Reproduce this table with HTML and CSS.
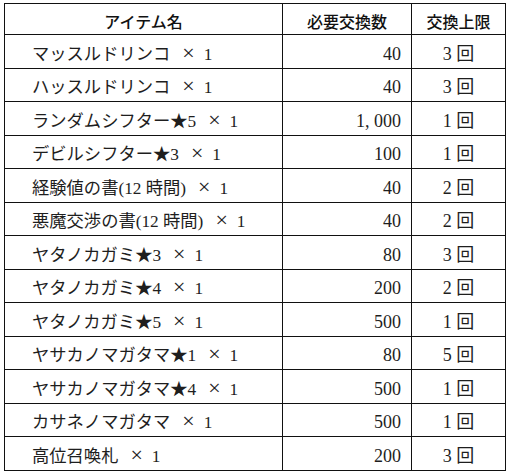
FILE: index.html
```html
<!DOCTYPE html>
<html lang="ja">
<head>
<meta charset="utf-8">
<link rel="stylesheet" href="styles.css">
</head>
<body>
<table class="exchange">
  <colgroup>
    <col class="c-name">
    <col class="c-cost">
    <col class="c-limit">
  </colgroup>
  <thead>
    <tr>
      <th>アイテム名</th>
      <th>必要交換数</th>
      <th>交換上限</th>
    </tr>
  </thead>
  <tbody>
    <tr><td class="name">マッスルドリンコ<span class="x">×</span>1</td><td class="cost">40</td><td class="limit">3 回</td></tr>
    <tr><td class="name">ハッスルドリンコ<span class="x">×</span>1</td><td class="cost">40</td><td class="limit">3 回</td></tr>
    <tr><td class="name">ランダムシフター★5<span class="x">×</span>1</td><td class="cost">1, 000</td><td class="limit">1 回</td></tr>
    <tr><td class="name">デビルシフター★3<span class="x">×</span>1</td><td class="cost">100</td><td class="limit">1 回</td></tr>
    <tr><td class="name">経験値の書(12 時間)<span class="x">×</span>1</td><td class="cost">40</td><td class="limit">2 回</td></tr>
    <tr><td class="name">悪魔交渉の書(12 時間)<span class="x">×</span>1</td><td class="cost">40</td><td class="limit">2 回</td></tr>
    <tr><td class="name">ヤタノカガミ★3<span class="x">×</span>1</td><td class="cost">80</td><td class="limit">3 回</td></tr>
    <tr><td class="name">ヤタノカガミ★4<span class="x">×</span>1</td><td class="cost">200</td><td class="limit">2 回</td></tr>
    <tr><td class="name">ヤタノカガミ★5<span class="x">×</span>1</td><td class="cost">500</td><td class="limit">1 回</td></tr>
    <tr><td class="name">ヤサカノマガタマ★1<span class="x">×</span>1</td><td class="cost">80</td><td class="limit">5 回</td></tr>
    <tr><td class="name">ヤサカノマガタマ★4<span class="x">×</span>1</td><td class="cost">500</td><td class="limit">1 回</td></tr>
    <tr><td class="name">カサネノマガタマ<span class="x">×</span>1</td><td class="cost">500</td><td class="limit">1 回</td></tr>
    <tr><td class="name">高位召喚札<span class="x">×</span>1</td><td class="cost">200</td><td class="limit">3 回</td></tr>
  </tbody>
</table>
</body>
</html>
```
FILE: styles.css
```css
html, body {
  margin: 0;
  padding: 0;
  background: #ffffff;
}

body {
  padding: 3px 0 0 4px;
  font-family: "Liberation Serif", "Noto Sans CJK JP", serif;
  color: #1e1e1e;
}

.exchange {
  border-collapse: collapse;
  table-layout: fixed;
  width: 501px;
}

.c-name { width: 278px; }
.c-cost { width: 129px; }
.c-limit { width: 94px; }

.exchange th,
.exchange td {
  border: 1px solid #111111;
  vertical-align: middle;
  white-space: nowrap;
  line-height: 20px;
}

.exchange th {
  height: 26px;
  padding: 4px 0 0;
  font-family: "Noto Sans CJK JP", sans-serif;
  font-weight: 500;
  font-size: 16px;
  color: #111111;
  text-align: center;
}

.exchange td {
  height: 27.5px;
  padding: 5px 0 0;
  font-size: 17.3px;
}

.exchange td.name {
  text-align: left;
  padding-left: 27px;
}

.exchange td.cost {
  text-align: right;
  padding-right: 10px;
  font-size: 18px;
}

.exchange td.limit {
  text-align: center;
  font-size: 18px;
}

.x {
  display: inline-block;
  font-size: 22px;
  line-height: 20px;
  margin: 0 9px 0 12px;
  font-weight: 300;
}
```
